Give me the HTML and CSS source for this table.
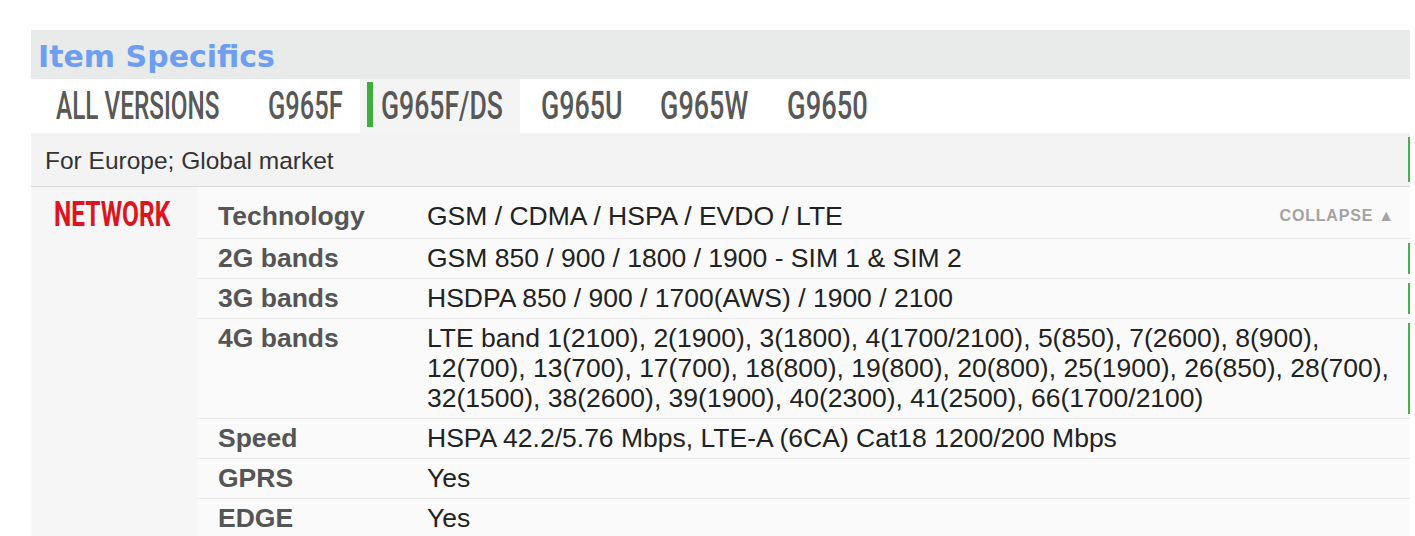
FILE: index.html
```html
<!DOCTYPE html>
<html>
<head>
<meta charset="utf-8">
<title>Item Specifics</title>
<link rel="stylesheet" href="styles.css">
</head>
<body>
<div class="page">
  <div class="title-bar"><h2 class="title">Item Specifics</h2></div>
  <nav class="tabs">
    <a class="tab tab-all"><span class="cond t-all"><span class="cond-in">ALL VERSIONS</span></span></a>
    <a class="tab tab-f"><span class="cond t-f"><span class="cond-in">G965F</span></span></a>
    <a class="tab tab-active"><span class="cond t-ds"><span class="cond-in">G965F/DS</span></span></a>
    <a class="tab tab-u"><span class="cond t-u"><span class="cond-in">G965U</span></span></a>
    <a class="tab"><span class="cond t-w"><span class="cond-in">G965W</span></span></a>
    <a class="tab"><span class="cond t-o"><span class="cond-in">G9650</span></span></a>
  </nav>
  <div class="desc mark">For Europe; Global market</div>
  <div class="specs">
    <div class="cat"><span class="cond t-net"><span class="cond-in">NETWORK</span></span></div>
    <div class="rows">
      <div class="row first">
        <div class="label">Technology</div>
        <div class="val val-action"><span>GSM / CDMA / HSPA / EVDO / LTE</span><span class="collapse">COLLAPSE ▲</span></div>
      </div>
      <div class="row mark">
        <div class="label">2G bands</div>
        <div class="val">GSM 850 / 900 / 1800 / 1900 - SIM 1 &amp; SIM 2</div>
      </div>
      <div class="row mark">
        <div class="label">3G bands</div>
        <div class="val">HSDPA 850 / 900 / 1700(AWS) / 1900 / 2100</div>
      </div>
      <div class="row mark">
        <div class="label">4G bands</div>
        <div class="val">LTE band 1(2100), 2(1900), 3(1800), 4(1700/2100), 5(850), 7(2600), 8(900), 12(700), 13(700), 17(700), 18(800), 19(800), 20(800), 25(1900), 26(850), 28(700), 32(1500), 38(2600), 39(1900), 40(2300), 41(2500), 66(1700/2100)</div>
      </div>
      <div class="row">
        <div class="label">Speed</div>
        <div class="val">HSPA 42.2/5.76 Mbps, LTE-A (6CA) Cat18 1200/200 Mbps</div>
      </div>
      <div class="row">
        <div class="label">GPRS</div>
        <div class="val">Yes</div>
      </div>
      <div class="row">
        <div class="label">EDGE</div>
        <div class="val">Yes</div>
      </div>
    </div>
  </div>
</div>
</body>
</html>
```
FILE: styles.css
```css
html, body {
  margin: 0;
  padding: 0;
  background: #ffffff;
}

body {
  font-family: "Liberation Sans", Arial, sans-serif;
  color: #222;
}

.page {
  margin: 30px 0 0 31px;
  width: 1379px;
}

/* header */
.title-bar {
  background: #e9eaea;
  height: 49px;
  padding-left: 7px;
  box-sizing: border-box;
}

.title {
  margin: 0;
  padding-top: 4px;
  font-family: "DejaVu Sans", sans-serif;
  font-weight: bold;
  font-size: 30px;
  line-height: 45px;
  color: #6d9ef0;
}

/* condensed text helper */
.cond {
  display: inline-block;
  white-space: nowrap;
  width: var(--w);
}

.cond-in {
  display: inline-block;
  transform: scaleX(var(--s));
  transform-origin: 0 50%;
}

/* tabs */
.tabs {
  display: flex;
  height: 54px;
  background: #ffffff;
}

.tab {
  display: flex;
  align-items: center;
  padding: 0 19px;
  font-family: Roboto, "Liberation Sans", sans-serif;
  font-weight: 500;
  font-size: 38px;
  line-height: 54px;
  color: #585858;
  text-decoration: none;
}

.tab-all { padding: 0 24px 0 25px; }
.tab-f { padding: 0 17px 0 23px; }
.tab-u { padding: 0 18px 0 21px; }

.tab-active {
  background: #f4f4f4;
  padding: 0 16px 0 7px;
}

.tab-active::before {
  content: "";
  align-self: flex-start;
  width: 6px;
  height: 45px;
  margin: 3px 8px 0 0;
  background: #3fae3f;
}

.t-all { --w: 165px; --s: 0.64; }
.t-f   { --w: 75px;  --s: 0.67; }
.t-ds  { --w: 123px; --s: 0.70; }
.t-u   { --w: 82px;  --s: 0.705; }
.t-w   { --w: 89px;  --s: 0.71; }
.t-o   { --w: 81px;  --s: 0.72; }

/* description */
.desc {
  height: 54px;
  box-sizing: border-box;
  padding: 3px 0 0 14px;
  font-size: 24.5px;
  line-height: 50px;
  color: #333;
  background-color: #f3f3f3;
  border-bottom: 1px solid #dadada;
}

.mark {
  background-image: linear-gradient(#4cae4c, #4cae4c);
  background-repeat: no-repeat;
  background-position: right center;
  background-size: 2px calc(100% - 8px);
}

/* specs */
.specs {
  display: flex;
  background: #f6f6f6;
}

.cat {
  width: 166px;
  flex: none;
  box-sizing: border-box;
  padding: 10px 0 0 23px;
  font-family: Roboto, "Liberation Sans", sans-serif;
  font-weight: 700;
  font-size: 35px;
  line-height: 35px;
  color: #dc1520;
}

.t-net { --w: 116px; --s: 0.7; }

.rows {
  flex: 1;
  background-color: #fafafa;
}

.row {
  display: flex;
  padding: 4px 8px 5px 21px;
  border-top: 1px solid #e9e9e9;
  font-size: 26.5px;
  line-height: 30px;
  background-color: #fafafa;
}

.row.first {
  border-top: 0;
  padding-top: 14px;
  padding-bottom: 7px;
}

.label {
  width: 209px;
  flex: none;
  font-weight: bold;
  color: #555;
}

.val {
  flex: 1;
  color: #222;
}

.val-action {
  display: flex;
  align-items: center;
  justify-content: space-between;
}

.collapse {
  margin-right: 7px;
  font-size: 16px;
  font-weight: bold;
  line-height: 1;
  letter-spacing: 0.8px;
  color: #a3a3a3;
}
```
